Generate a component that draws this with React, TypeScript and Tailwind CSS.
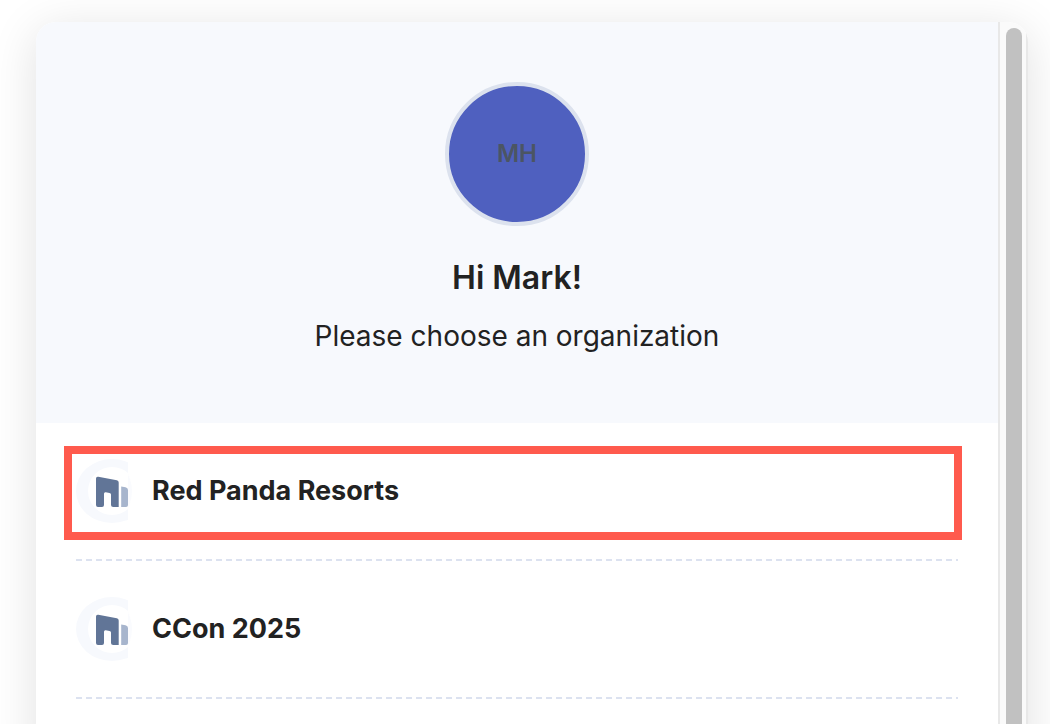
const organizations = [
  { name: "Red Panda Resorts", highlighted: true },
  { name: "CCon 2025", highlighted: false },
];

function OrganizationIcon() {
  return (
    <svg viewBox="0 0 56 64" className="h-16 w-14 shrink-0" aria-hidden="true">
      <defs>
        <clipPath id="badge">
          <rect width="52" height="64" />
        </clipPath>
      </defs>
      <ellipse cx="28" cy="32" rx="28" ry="32" fill="#fafbfe" />
      <rect width="52" height="64" fill="#fff" />
      <g clipPath="url(#badge)">
        <path
          fillRule="evenodd"
          fill="#f7f9fd"
          d="M36 0A36 32 0 0 0 36 64A36 32 0 0 0 36 0ZM36 8A24 24 0 0 1 36 56A24 24 0 0 1 36 8Z"
        />
        <path
          fill="#617597"
          d="M22.300 17.800L40.800 21.200Q42.700 21.600 42.700 23.500V48H37.200Q35 48 35 46V35.500Q35 34.200 33.500 34L29.800 33.300Q28 33 28 34.800V46Q28 48 26 48H22Q20 48 20 46V19.500Q20 17.400 22.300 17.800Z"
        />
        <path fill="#a7b5cd" d="M45.200 27.500L49.500 28.300Q52 28.800 52 31V46Q52 48 50 48H45.200Z" />
      </g>
    </svg>
  );
}

export default function App() {
  return (
    <div className="h-screen overflow-hidden bg-white pt-[22px] pr-[22px] pl-9 font-['Inter',sans-serif] text-[#222]">
      <div className="flex h-[calc(100%+40px)] overflow-hidden rounded-[20px] bg-white shadow-[0_8px_48px_rgba(0,0,0,0.12)]">
        <main className="min-w-0 flex-1">
          <header className="flex flex-col items-center bg-[#f7f9fd] pt-15 pb-[69px]">
            <div className="flex size-36 items-center justify-center rounded-full border-4 border-[#dce2ee] bg-[#4f60bf] text-2xl font-semibold text-[#4b5563]">
              MH
            </div>
            <h1 className="mt-8 text-[32px] leading-10 font-semibold">Hi Mark!</h1>
            <p className="mt-5 text-[28px] leading-9">Please choose an organization</p>
          </header>

          <ul className="px-10">
            {organizations.map((organization) => (
              <li key={organization.name} className="relative">
                <button type="button" className="flex h-34 w-full items-center gap-5 text-left">
                  <OrganizationIcon />
                  <span className="text-[27px] leading-8 font-bold">{organization.name}</span>
                </button>
                <div className="h-0.5 bg-[repeating-linear-gradient(90deg,#dce2f0_0_6px,transparent_6px_10px)]" />
                {organization.highlighted && (
                  <div className="pointer-events-none absolute -right-1 bottom-[21px] -left-3 h-[94px] border-8 border-[#ff5a4d]" />
                )}
              </li>
            ))}
          </ul>
        </main>

        {/* Scrollbar track */}
        <div className="w-[30px] border-x-2 border-[#e8e8e8] bg-[#fafafa] px-1.5 pt-1.5 pr-1">
          <div className="h-full rounded-full bg-[#c1c1c1]" />
        </div>
      </div>
    </div>
  );
}
